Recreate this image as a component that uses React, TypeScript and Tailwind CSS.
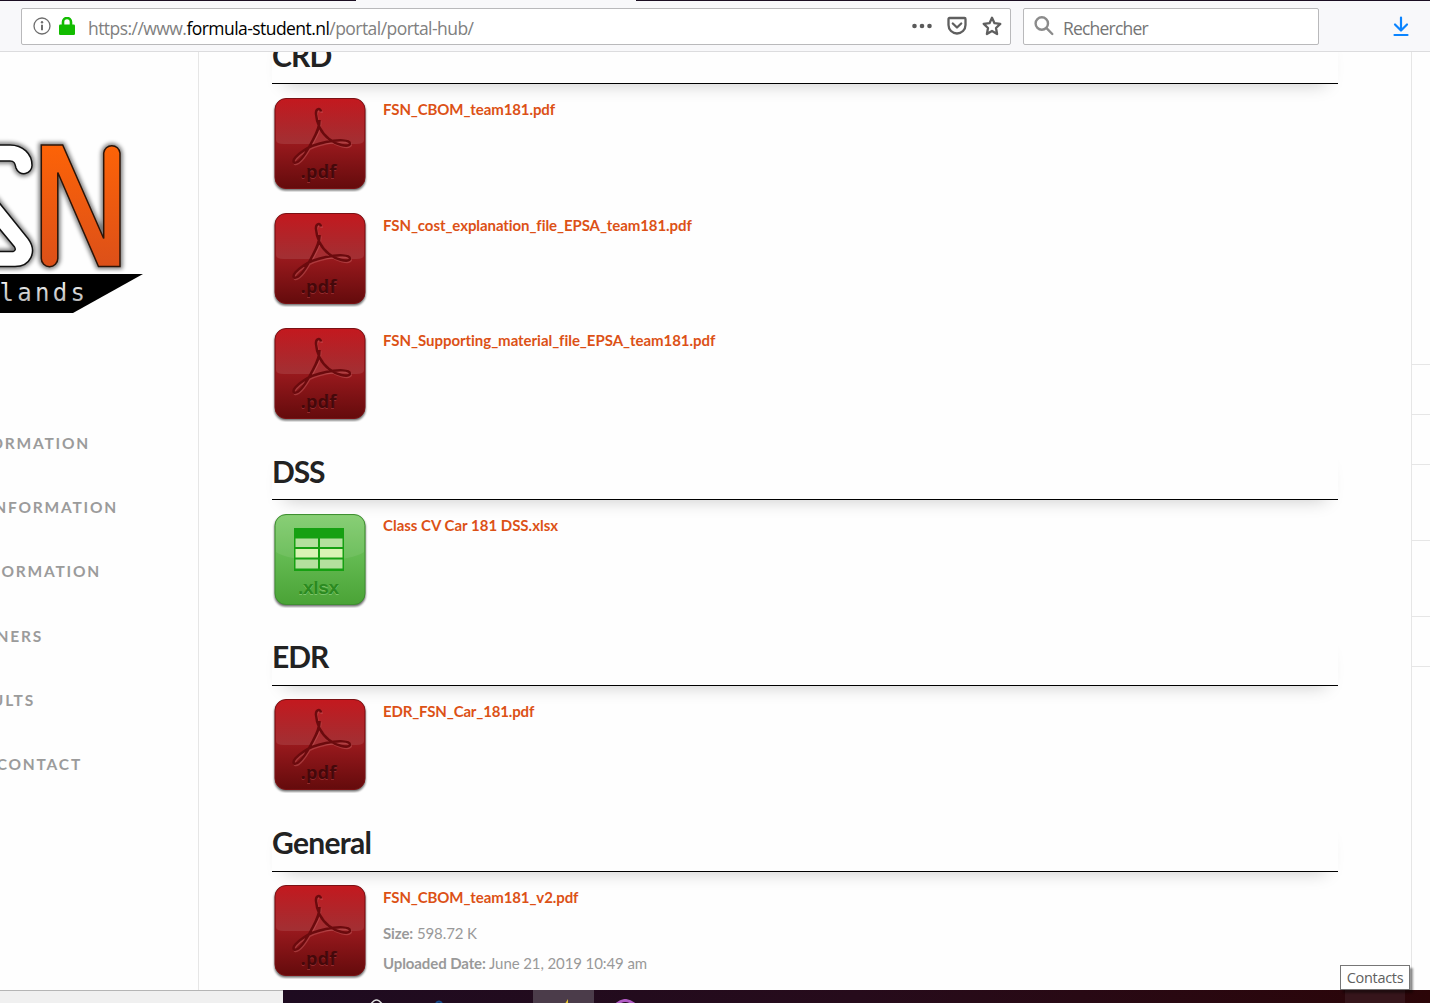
import React from 'react';

type FileItem = { name: string; kind: 'pdf' | 'xlsx'; tracking: string; size?: string; date?: string };
type Section = { title: string; pad: string; heading: string; files: FileItem[] };

const sections: Section[] = [
  {
    title: 'CRD',
    pad: 'pt-[12px]',
    heading: 'pt-[5px] tracking-[-0.85px]',
    files: [
      { name: 'FSN_CBOM_team181.pdf', kind: 'pdf', tracking: 'pt-[10px] tracking-[-0.1px]' },
      { name: 'FSN_cost_explanation_file_EPSA_team181.pdf', kind: 'pdf', tracking: 'pt-[11px] tracking-[-0.08px]' },
      { name: 'FSN_Supporting_material_file_EPSA_team181.pdf', kind: 'pdf', tracking: 'pt-[11px] tracking-[-0.04px]' },
    ],
  },
  {
    title: 'DSS',
    pad: 'pt-[12px]',
    heading: 'pt-[5px] tracking-[-1.1px]',
    files: [{ name: 'Class CV Car 181 DSS.xlsx', kind: 'xlsx', tracking: 'pt-[10px]' }],
  },
  {
    title: 'EDR',
    pad: 'pt-[11px]',
    heading: 'pt-[4px] tracking-[-1px]',
    files: [{ name: 'EDR_FSN_Car_181.pdf', kind: 'pdf', tracking: 'pt-[10px] tracking-[-0.15px]' }],
  },
  {
    title: 'General',
    pad: 'pt-[11px]',
    heading: 'pt-[4px] tracking-[-0.7px]',
    files: [{ name: 'FSN_CBOM_team181_v2.pdf', kind: 'pdf', tracking: 'pt-[10px] tracking-[-0.1px]', size: '598.72 K', date: 'June 21, 2019 10:49 am' }],
  },
];

const nav = [
  { label: 'ORMATION', width: 'w-[90px]' },
  { label: 'NFORMATION', width: 'w-[118px]' },
  { label: 'ORMATION', width: 'w-[101px]' },
  { label: 'NERS', width: 'w-[43px]' },
  { label: 'ULTS', width: 'w-[35px]' },
  { label: 'CONTACT', width: 'w-[82px]' },
];

function PdfIcon() {
  const swirl =
    'M49 15.500 C48.500 11.500 43.500 12.500 44 18 C44.500 27 49 37 57 43 C64 48.500 76 52 78 48 C78.500 43.500 66 43.500 54 46 C44 48 37 50.500 31 55 C25 59 20 64 22 66.500 C27 68.500 34 57 39 47.500 C43.500 39 48 32 47.500 24';
  return (
    <svg className="block h-[96px] w-[96px] shrink-0" viewBox="0 0 96 96">
      <defs>
        <linearGradient id="pdfBg" x1="0" y1="0" x2="0" y2="1">
          <stop offset="0" stopColor="#c4191f" />
          <stop offset="0.5" stopColor="#98191d" />
          <stop offset="1" stopColor="#640b0c" />
        </linearGradient>
        <linearGradient id="pdfGloss" x1="0" y1="0" x2="0" y2="1">
          <stop offset="0" stopColor="#fff" stopOpacity="0" />
          <stop offset="1" stopColor="#fff" stopOpacity="0.1" />
        </linearGradient>
        <filter id="iconShadow" x="-10%" y="-10%" width="120%" height="120%">
          <feGaussianBlur stdDeviation="0.8" />
        </filter>
      </defs>
      <rect x="2.5" y="4" width="91" height="90.5" rx="11" fill="#000" opacity="0.6" filter="url(#iconShadow)" />
      <rect x="3" y="2.5" width="90" height="90" rx="11" fill="url(#pdfBg)" stroke="#7a1114" strokeWidth="1" />
      <path d="M4 14 Q4 3.500 15 3.500 H81 Q92 3.500 92 14 V44 Q92 48 84 48 H12 Q4 48 4 44 Z" fill="url(#pdfGloss)" />
      <path d={swirl} transform="translate(0.8 1.3)" fill="none" stroke="#c55a5c" strokeWidth="2.400" opacity="0.5" />
      <path d={swirl} fill="none" stroke="#6b0a0d" strokeWidth="2.500" />
      <text x="46.500" y="83" textAnchor="middle" textLength="36" fontSize="18.500" fontWeight="700" fill="#b8484a" opacity="0.5" className="font-['Open_Sans',sans-serif]">.pdf</text>
      <text x="46.500" y="82" textAnchor="middle" textLength="36" fontSize="18.500" fontWeight="700" fill="#45080a" className="font-['Open_Sans',sans-serif]">.pdf</text>
    </svg>
  );
}

function XlsxIcon() {
  return (
    <svg className="block h-[96px] w-[96px] shrink-0" viewBox="0 0 96 96">
      <defs>
        <linearGradient id="xlsBg" x1="0" y1="0" x2="0" y2="1">
          <stop offset="0" stopColor="#7fcb6b" />
          <stop offset="0.5" stopColor="#62b950" />
          <stop offset="1" stopColor="#4aa336" />
        </linearGradient>
        <filter id="xlsShadow" x="-10%" y="-10%" width="120%" height="120%">
          <feGaussianBlur stdDeviation="0.8" />
        </filter>
      </defs>
      <rect x="2.5" y="4" width="91" height="90.5" rx="11" fill="#000" opacity="0.6" filter="url(#xlsShadow)" />
      <rect x="3" y="2.5" width="90" height="90" rx="11" fill="url(#xlsBg)" stroke="#3f8f31" strokeWidth="1" />
      <path d="M4 14 Q4 3.500 15 3.500 H81 Q92 3.500 92 14 V40 Q80 48 48 48 T4 40 Z" fill="#fff" opacity="0.08" />
      <rect x="22" y="16" width="50" height="43" fill="#16a012" />
      <g fill="#b4e09e">
        <rect x="23.500" y="26.500" width="22.500" height="8.500" />
        <rect x="48" y="26.500" width="22.500" height="8.500" />
        <rect x="23.500" y="47.500" width="22.500" height="9" />
        <rect x="48" y="47.500" width="22.500" height="9" />
      </g>
      <g fill="#daf3b4">
        <rect x="23.500" y="37" width="22.500" height="8.500" />
        <rect x="48" y="37" width="22.500" height="8.500" />
      </g>
      <text x="46.500" y="83" textAnchor="middle" textLength="41" fontSize="19" fontWeight="700" fill="#8fd07e" opacity="0.7" className="font-['Liberation_Sans',sans-serif]">.xlsx</text>
      <text x="46.500" y="82" textAnchor="middle" textLength="41" fontSize="19" fontWeight="700" fill="#2b8a20" className="font-['Liberation_Sans',sans-serif]">.xlsx</text>
    </svg>
  );
}

function Logo() {
  const n = 'M41.300 145 H62.700 L103.700 238.500 V153 A8.200 8.200 0 0 1 120 153 V266.500 H98.500 L57.800 172.500 V258.500 A8.200 8.200 0 0 1 41.300 258.500 Z';
  const sTop = 'M-5 145 H10 C23 145 32 154 32 165 A8.200 8.200 0 0 1 16 168 C15 163 14 161 10 161 H-5';
  const sLow = 'M-5 197.500 L28 238.500 C38 252 30 266.500 15 266.500 H-5 M-5 251.500 H13 Q16.500 250.500 14.500 247 L-5 223.500';
  return (
    <svg className="block h-[210px] w-[198px]" viewBox="0 120 198 210">
      <defs>
        <linearGradient id="orange" x1="0" y1="0" x2="0" y2="1">
          <stop offset="0" stopColor="#fd6307" />
          <stop offset="1" stopColor="#dc5019" />
        </linearGradient>
        <linearGradient id="silver" x1="0" y1="0" x2="0" y2="1">
          <stop offset="0" stopColor="#fff" />
          <stop offset="1" stopColor="#a8a8a8" />
        </linearGradient>
        <filter id="logoShadow" x="-20%" y="-20%" width="140%" height="140%">
          <feGaussianBlur stdDeviation="2" />
        </filter>
      </defs>
      <g fill="none" stroke="#000" strokeWidth="5" opacity="0.55" filter="url(#logoShadow)">
        <path d={n} />
        <path d={sTop} />
        <path d={sLow} />
      </g>
      <path d={sTop} fill="#fff" stroke="#111" strokeWidth="1.500" />
      <path d="M-5 197.500 L28 238.500 C38 252 30 266.500 15 266.500 H-5 V251.500 H13 Q16.500 250.500 14.500 247 L-5 223.500 Z" fill="#fff" stroke="#111" strokeWidth="1.500" />
      <path d={n} fill="url(#orange)" stroke="#2b1408" strokeWidth="1.500" />
      <path d="M0 274 H143 L73 313 H0 Z" fill="#000" />
      <text x="-0.500" y="300.500" fontSize="24" letterSpacing="3.300" fill="url(#silver)" className="font-['DejaVu_Sans_Mono',monospace]">lands</text>
    </svg>
  );
}

function Toolbar() {
  return (
    <header className="flex h-[52px] shrink-0 flex-col border-b border-[#dcdcde] bg-[#f8f8fa] font-['Open_Sans',sans-serif]">
      <div className="flex h-px shrink-0">
        <div className="w-[356px] bg-[#1b0e22]" />
        <div className="w-[280px] bg-[#f8f8fa]" />
        <div className="flex-1 bg-[#1b0e22]" />
      </div>
      <div className="flex pl-[21px] pt-[7px]">
        <div className="flex h-[37px] w-[990px] items-center rounded-[2px] border border-[#b9b9bb] bg-white pl-[11px]">
          <svg className="-mt-[2px] h-[18px] w-[18px]" viewBox="0 0 18 18" fill="none" stroke="#6e6e6e">
            <circle cx="9" cy="9" r="8" strokeWidth="1.300" />
            <path d="M9 7.800 V13.300" strokeWidth="2" />
            <circle cx="9" cy="5.300" r="1.200" fill="#6e6e6e" stroke="none" />
          </svg>
          <svg className="-mt-[2px] ml-[8px] h-[18px] w-[16px]" viewBox="0 0 16 18">
            <path d="M4 9 V5 A4 4 0 0 1 12 5 V9" fill="none" stroke="#12bc00" strokeWidth="2.600" />
            <rect x="0" y="7.500" width="16" height="10.500" rx="1.300" fill="#12bc00" />
          </svg>
          <div className="ml-[13px] w-[800px] whitespace-nowrap pt-[3px] text-[17.5px] tracking-[-0.55px] text-[#808080]">
            https://www.<span className="text-black">formula-student.nl</span>/portal/portal-hub/
          </div>
          <svg className="-mt-[2px] ml-[24px] h-[6px] w-[20px] shrink-0" viewBox="0 0 20 6" fill="#5a5a5a">
            <circle cx="2.500" cy="3" r="2.300" />
            <circle cx="10" cy="3" r="2.300" />
            <circle cx="17.500" cy="3" r="2.300" />
          </svg>
          <svg className="-mt-[2px] ml-[15px] h-[20px] w-[20px] shrink-0" viewBox="0 0 20 20" fill="none" stroke="#5f5f5f" strokeWidth="2.300" strokeLinecap="round" strokeLinejoin="round">
            <path d="M2.500 2 H17.500 Q18.500 2 18.500 3 V9 A8.500 8.500 0 0 1 1.500 9 V3 Q1.500 2 2.500 2 Z" />
            <path d="M5.800 7.500 L10 11.500 L14.200 7.500" />
          </svg>
          <svg className="-mt-[2px] ml-[15px] h-[20px] w-[20px] shrink-0" viewBox="0 0 20 20" fill="none" stroke="#5f5f5f" strokeWidth="2.300" strokeLinejoin="round">
            <path d="M10 1.800 L12.500 7.200 L18.300 7.900 L14 12 L15.100 18 L10 15 L4.900 18 L6 12 L1.700 7.900 L7.500 7.200 Z" />
          </svg>
        </div>
        <div className="ml-[12px] flex h-[37px] w-[296px] items-center rounded-[2px] border border-[#b9b9bb] bg-white pl-[10px]">
          <svg className="-mt-[2px] h-[20px] w-[20px]" viewBox="0 0 20 20" fill="none" stroke="#8b8b8b" strokeWidth="2.400" strokeLinecap="round">
            <circle cx="7.800" cy="7.500" r="6.200" />
            <path d="M12.500 12.200 L18.300 18" />
          </svg>
          <span className="ml-[9px] pt-[3px] text-[17.5px] tracking-[-0.8px] text-[#757575]">Rechercher</span>
        </div>
        <svg className="ml-[74px] mt-[8px] h-[21px] w-[16px]" viewBox="0 0 16 21" fill="none" stroke="#0a84ff" strokeWidth="2.200" strokeLinecap="round" strokeLinejoin="round">
          <path d="M8 1.500 V14 M2 8.500 L8 14.500 L14 8.500 M1.500 19 H14.500" />
        </svg>
      </div>
    </header>
  );
}

function Sidebar() {
  return (
    <aside className="w-[199px] shrink-0 overflow-hidden border-r border-[#e6e6e6] pt-[68px]">
      <Logo />
      <nav className="mt-[81.6px] flex flex-col">
        {nav.map((item, i) => (
          <div key={i} className={`${item.width} flex h-[64.200px] items-center justify-end overflow-hidden whitespace-nowrap font-['Lato',sans-serif] text-[15.5px] font-bold tracking-[1.800px] text-[#9b9b9b]`}>
            {item.label}
          </div>
        ))}
      </nav>
    </aside>
  );
}

function FileRow({ file, pad }: { file: FileItem; pad: string }) {
  return (
    <div className="flex h-[115px]">
      <div className={`${pad} shrink-0`}>{file.kind === 'pdf' ? <PdfIcon /> : <XlsxIcon />}</div>
      <div className={`${file.tracking} ml-[15px] text-[15px] leading-[30px] text-[#999]`}>
        <div className="mb-[6px] font-bold text-[#dc5116]">{file.name}</div>
        {file.size && <div><b>Size:</b> {file.size}</div>}
        {file.date && <div><b>Uploaded Date:</b> {file.date}</div>}
      </div>
    </div>
  );
}

const rules = ['h-[313px]', 'h-[50px]', 'h-[50px]', 'h-[76px]', 'h-[76px]', 'h-[50px]'];

export default function App() {
  return (
    <div className="flex h-[1003px] w-[1430px] flex-col overflow-hidden bg-white">
      <Toolbar />
      <div className="flex h-[938px] shrink-0 overflow-hidden bg-[#fefefe]">
        <Sidebar />
        <main className="w-[1212px] shrink-0 pl-[73px] pr-[73px] font-['Lato',sans-serif]">
          <div className="-mt-[39px]">
            {sections.map((s) => (
              <section key={s.title}>
                <div className="pt-[15px]">
                  <h2 className={`${s.heading} h-[56px] border-b border-black bg-[#fefefe] text-[30px] font-bold leading-[44px] text-[#222] shadow-[0_12px_18px_-12px_rgba(0,0,0,0.22)]`}>{s.title}</h2>
                </div>
                {s.files.map((f) => <FileRow key={f.name} file={f} pad={s.pad} />)}
              </section>
            ))}
          </div>
        </main>
        <div className="w-[19px] shrink-0 border-l border-[#e6e6e6]">
          {rules.map((h, i) => <div key={i} className={`${h} border-b border-[#e6e6e6]`} />)}
        </div>
      </div>
      <footer className="relative flex h-[13px] shrink-0">
        <div className="w-[283px] border-t border-[#b5b5b5] bg-[#f0f0f0]" />
        <div className="relative flex-1 bg-linear-to-r from-[#1e0b20] via-[#260b1b] to-[#2b0508]">
          <div className="absolute left-[250px] top-0 h-[13px] w-[61px] bg-[#4b3c4a]" />
          <div className="absolute left-[1062px] top-0 h-[13px] w-[60px] bg-[#36151b]" />
          <svg className="absolute left-[85px] top-[9px] h-[4px] w-[280px]" viewBox="0 0 280 4" fill="none">
            <path d="M3 5 Q8.500 -3 14 5" stroke="#ddd" strokeWidth="1.600" />
            <path d="M68 4 Q71 1 74 4" stroke="#174b8a" strokeWidth="2" />
            <path d="M197.500 4 L200 0 V4 Z" fill="#e9c52b" />
            <path d="M249 5 Q257 -2 266 5" stroke="#b05bc4" strokeWidth="3" />
          </svg>
        </div>
        <div className="absolute bottom-[13px] left-[1340px] flex h-[25px] w-[70px] items-center justify-center border border-[#767676] bg-white font-['Open_Sans',sans-serif] text-[14.500px] tracking-[-0.300px] text-[#606060] shadow-[3px_3px_2px_rgba(0,0,0,0.4)]">
          Contacts
        </div>
      </footer>
    </div>
  );
}
